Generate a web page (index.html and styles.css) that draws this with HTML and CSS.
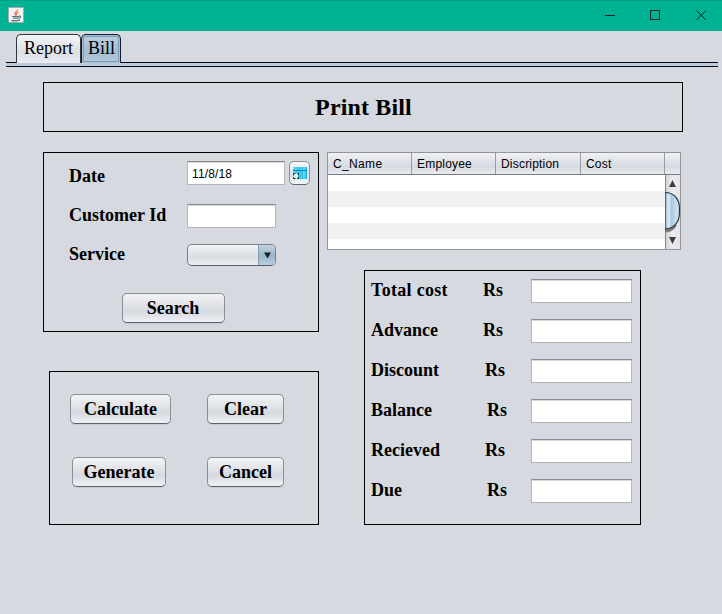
FILE: index.html
```html
<!DOCTYPE html>
<html lang="en">
<head>
<meta charset="utf-8">
<title>Print Bill</title>
<link rel="stylesheet" href="styles.css">
</head>
<body>
<header class="titlebar">
  <svg class="java" width="16" height="16" viewBox="0 0 16 16">
    <rect x=".5" y=".5" width="15" height="15" rx="1" fill="#f3f3f1" stroke="#a2aca9"/>
    <path d="M9.500 2.500C10 4.500 5 5.500 7.500 8.500M10.500 5C7.500 6.200 8.500 7 8.500 8.500" fill="none" stroke="#df7046" stroke-width="1.200"/>
    <path d="M4 9.500h7M5 11.200h5.500M3.500 13.300c3 .8 6 .6 8.500-.4M11 9.200c2.400-.4 2 1.800-.3 2" fill="none" stroke="#587286" stroke-width="1.200"/>
  </svg>
  <svg class="controls" width="138" height="30" viewBox="0 0 138 30" fill="none" stroke="#06231d">
    <path d="M21 15.500h10M66.500 10.500h9v9h-9z"/>
    <path d="M112.500 10.500l9.500 9.500M122 10.500l-9.500 9.500"/>
  </svg>
</header>
<nav class="tabs">
  <span class="tab">Report</span>
  <span class="tab active">Bill</span>
</nav>
<div class="tab-rule"></div>
<main>
  <h1 class="panel">Print Bill</h1>
  <div class="columns">
    <section class="left">
      <form class="panel search">
        <div class="row date-row"><label>Date</label><input class="field date" value="11/8/18"><span class="picker"><svg width="15" height="14" viewBox="0 0 15 14">
          <defs><linearGradient id="cal" x2="1" y2="0"><stop offset="0" stop-color="#52dcf5"/><stop offset=".5" stop-color="#2fc4ee"/><stop offset=".8" stop-color="#58e4fb"/><stop offset="1" stop-color="#18a4dc"/></linearGradient></defs>
          <path d="M1 1h14v12H1z" fill="url(#cal)"/><path d="M1 4.500h14" stroke="#0878a8" opacity=".8"/><path d="M10.500 1v12" stroke="#0878a8" opacity=".3"/><path d="M1 7h6v6H1z" fill="#c8f4fc"/><path d="M1.500 9.500v-2h2M5 7.500h1.500v2M1.500 11v1.500h2M5 12.500h1.500v-2" fill="none" stroke="#0c2a3a"/>
        </svg></span></div>
        <div class="row"><label>Customer Id</label><input class="field"></div>
        <div class="row"><label>Service</label><span class="combo"><span class="combo-arrow"><svg width="7" height="7" viewBox="0 0 7 7"><path d="M0 .5h7L3.500 6.500z" fill="#14242c"/></svg></span></span></div>
        <button type="button" class="btn">Search</button>
      </form>
      <div class="panel actions">
        <div class="action-row"><button class="btn calculate">Calculate</button><button class="btn narrow">Clear</button></div>
        <div class="action-row"><button class="btn generate">Generate</button><button class="btn narrow">Cancel</button></div>
      </div>
    </section>
    <section class="right">
      <div class="table">
        <div class="thead"><span>C_Name</span><span>Employee</span><span>Discription</span><span>Cost</span></div>
        <div class="tbody">
          <div class="stripes"></div>
          <svg class="scrollbar" width="15" height="74" viewBox="0 0 15 74">
            <defs><linearGradient id="track" x2="1" y2="0"><stop offset="0" stop-color="#d0d1d4"/><stop offset=".5" stop-color="#ececee"/><stop offset="1" stop-color="#e4e4e6"/></linearGradient>
            <linearGradient id="thumb" x2="1" y2="0"><stop offset="0" stop-color="#8fb0c8"/><stop offset=".25" stop-color="#dcecf7"/><stop offset=".45" stop-color="#a9c8de"/><stop offset="1" stop-color="#dcebf5"/></linearGradient></defs>
            <path d="M0 0h15v74H0z" fill="url(#track)"/>
            <path d="M.5 0v74" stroke="#85888e"/>
            <path d="M0 50V57.500C7 57 10 54 12 50z" fill="#777c82"/>
            <path d="M0 17.500C9 17.500 14.400 24 14.400 33v5C14.400 47 9 54 0 54z" fill="url(#thumb)" stroke="#26343f" stroke-width="1.200"/>
            <path d="M4 12L7.500 5l3.500 7zM4 62l3.500 7L11 62z" fill="#3c3f43"/>
          </svg>
        </div>
      </div>
      <div class="panel totals">
        <div class="total"><span class="cost">Total cost</span><span class="rs">Rs</span><input class="field"></div>
        <div class="total"><span>Advance</span><span class="rs">Rs</span><input class="field"></div>
        <div class="total"><span>Discount</span><span class="rs rs-mid">Rs</span><input class="field"></div>
        <div class="total"><span>Balance</span><span class="rs rs-far">Rs</span><input class="field"></div>
        <div class="total"><span>Recieved</span><span class="rs rs-mid">Rs</span><input class="field"></div>
        <div class="total"><span>Due</span><span class="rs rs-far">Rs</span><input class="field"></div>
      </div>
    </section>
  </div>
</main>
</body>
</html>
```
FILE: styles.css
```css
* { box-sizing: border-box; }
body {
  margin: 0;
  height: 614px;
  overflow: hidden;
  background: #d6d9df;
  color: #000;
  font-family: "Liberation Serif", serif;
  font-size: 18px;
}
.titlebar {
  display: flex;
  justify-content: space-between;
  height: 31px;
  padding-left: 8px;
  background: #00b294;
  border-top: 1px solid #049d84;
}
.java { margin-top: 6px; }
.controls { margin-top: -1px; }
.tabs { display: flex; height: 31px; padding: 3px 0 0 16px; }
.tab {
  width: 65px;
  height: 29px;
  padding-left: 7px;
  line-height: 27px;
  border: 1px solid #30343c;
  border-bottom: 0;
  border-radius: 5px 5px 0 0;
  background: linear-gradient(#f3f4f6, #dcdfe4 60%, #e8ebef);
}
.tab.active {
  width: 40px;
  padding-left: 6px;
  border-color: #101d30;
  background: linear-gradient(#bdcfdf, #a2bdd2 60%, #b4cbdc);
  box-shadow: inset 0 0 0 1px #a9c0d3, inset 0 0 0 2px #7e9db8;
}
.tab-rule {
  height: 5px;
  margin: 0 4px 0 6px;
  border-top: 1px solid #020719;
  border-bottom: 1px solid #020719;
  background: #bdcbd9;
}
main { padding: 15px 39px 0 43px; }
.panel { border: 1px solid #000; }
h1 {
  width: 640px;
  height: 50px;
  margin: 0 0 20px;
  padding-left: 1px;
  text-align: center;
  font-size: 24px;
  line-height: 48px;
  letter-spacing: .15px;
}
.columns { display: flex; gap: 8px; }
.left { width: 276px; }
.right { width: 354px; }
.search { height: 180px; padding: 8px 8px 0 25px; font-weight: bold; }
.row { display: flex; align-items: center; height: 24px; margin-bottom: 15px; }
.date-row { margin-bottom: 19px; }
.row label { width: 118px; line-height: 22px; margin-top: -2px; }
.date-row label { margin-top: 6px; }
.field {
  width: 89px;
  height: 24px;
  margin: 0;
  padding: 0 4px;
  border: 1px solid #b5b7ba;
  border-top-color: #888a8e;
  border-radius: 0;
  background: #fff;
  box-shadow: inset 0 1px 0 #d8d9db;
  font: 12px "Liberation Sans", sans-serif;
  color: #000;
  outline: 0;
}
.date { width: 98px; padding-top: 1px; letter-spacing: .15px; }
.picker {
  display: flex;
  align-items: center;
  justify-content: center;
  width: 21px;
  height: 24px;
  margin-left: 4px;
  border: 1px solid #8d9096;
  border-bottom-color: #62656b;
  border-radius: 5px;
  background: linear-gradient(#f7f8fa, #dce0e6 60%, #f2f5f9);
}
.combo {
  display: flex;
  justify-content: flex-end;
  width: 89px;
  height: 22px;
  border: 1px solid #7b8087;
  border-bottom-color: #555a62;
  border-radius: 5px;
  overflow: hidden;
  background: linear-gradient(#f3f4f6, #d9dce2 60%, #eceff4);
}
.combo-arrow {
  display: flex;
  align-items: center;
  justify-content: center;
  width: 17px;
  border-left: 1px solid #819cae;
  background: linear-gradient(#c0d1df, #9bb5c8 55%, #b9cedd);
}
.btn {
  display: block;
  height: 30px;
  padding: 1px 0 0;
  border: 1px solid #8b8e93;
  border-bottom-color: #5f6268;
  border-radius: 5px;
  background: linear-gradient(#f3f4f6, #d6d9df 62%, #eceef4 95%);
  box-shadow: 0 1px 0 #c5c8ce;
  color: #000;
  font: bold 18px "Liberation Serif", serif;
}
.search .btn { width: 103px; margin: 26px 0 0 53px; padding-right: 1px; }
.actions { height: 154px; margin: 39px 0 0 6px; padding: 22px 0 0 20px; }
.action-row { display: flex; height: 63px; }
.action-row .btn { flex: none; }
.calculate { width: 101px; margin-right: 36px; }
.generate { width: 94px; margin: 0 41px 0 2px; }
.narrow { width: 77px; }
.table { height: 98px; border: 1px solid #92959b; font: 12px "Liberation Sans", sans-serif; }
.thead {
  display: flex;
  height: 22px;
  border-bottom: 1px solid #777b81;
  background: linear-gradient(#f0f1f4, #d7dae1 65%, #e8ebf1);
  line-height: 22px;
  letter-spacing: .2px;
}
.thead span { width: 84px; padding-left: 5px; border-right: 1px solid #989ba1; }
.thead span:first-child { letter-spacing: .35px; }
.thead span:nth-child(3) { width: 85px; }
.tbody { display: flex; height: 74px; }
.stripes { flex: 1; background: repeating-linear-gradient(#fff 0 16px, #f1f1f1 16px 32px); }
.scrollbar { display: block; }
.totals { width: 277px; height: 255px; margin: 20px 0 0 37px; padding: 8px 8px 0 6px; font-weight: bold; }
.total { display: flex; height: 24px; margin-bottom: 16px; line-height: 23px; }
.total span:first-child { width: 112px; }
.total .cost { letter-spacing: .3px; }
.total .rs { width: 48px; }
.total .rs-mid { padding-left: 2px; }
.total .rs-far { padding-left: 4px; }
.total .field { width: 101px; margin-left: auto; }
```
